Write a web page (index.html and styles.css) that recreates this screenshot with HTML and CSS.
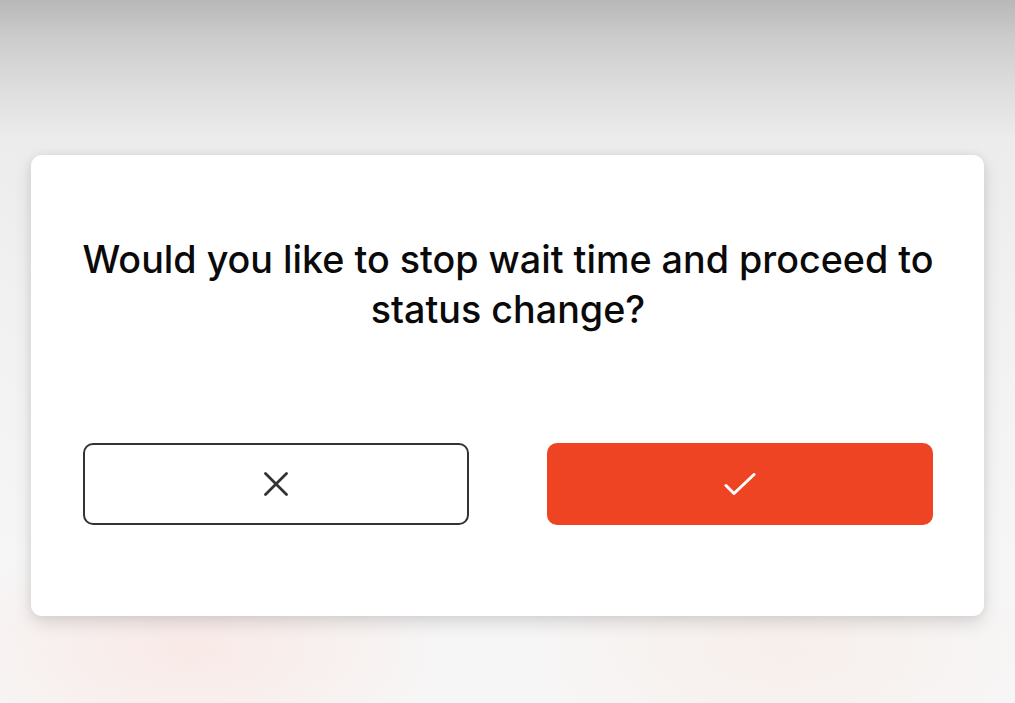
FILE: index.html
```html
<!DOCTYPE html>
<html lang="en">
<head>
<meta charset="utf-8">
<title>Stop wait time</title>
<link rel="stylesheet" href="styles.css">
</head>
<body>
<div class="screen">
  <div class="dialog">
    <p class="question">Would you like to stop wait time and proceed to status change?</p>
    <div class="actions">
      <button class="btn btn-cancel" aria-label="Cancel">
        <svg width="24" height="24" viewBox="0 0 24 24"><path d="M1.5 1.5 L22.5 22.5 M22.5 1.5 L1.5 22.5" stroke="#333333" stroke-width="2.8" stroke-linecap="round" fill="none"/></svg>
      </button>
      <button class="btn btn-confirm" aria-label="Confirm">
        <svg width="32" height="24" viewBox="0 0 32 24"><path d="M2 13.5 L10 21.5 L30 2.5" stroke="#ffffff" stroke-width="3" stroke-linecap="round" stroke-linejoin="round" fill="none"/></svg>
      </button>
    </div>
  </div>
</div>
</body>
</html>
```
FILE: styles.css
```css
html, body {
  margin: 0;
  padding: 0;
}
body {
  width: 1015px;
  height: 703px;
  overflow: hidden;
  font-family: Inter, "Noto Sans", sans-serif;
}
.screen {
  height: 703px;
  box-sizing: border-box;
  padding: 155px 31px 0 31px;
  background:
    radial-gradient(ellipse 260px 120px at 190px 650px, rgba(250, 228, 224, 0.7), rgba(250, 228, 224, 0) 100%),
    radial-gradient(ellipse 260px 120px at 780px 650px, rgba(248, 234, 228, 0.6), rgba(248, 234, 228, 0) 100%),
    linear-gradient(180deg, #b8b8b8 0px, #cdcdcd 40px, #dedede 90px, #ececec 140px, #f1f1f1 300px, #f6f6f6 560px, #f7f6f6 703px);
}
.dialog {
  width: 953px;
  height: 461px;
  box-sizing: border-box;
  background: #ffffff;
  border-radius: 11px;
  box-shadow: 0 7px 18px rgba(0, 0, 0, 0.13), 0 0 8px rgba(0, 0, 0, 0.06);
  padding: 79px 51px 0 52px;
  display: flex;
  flex-direction: column;
}
.question {
  margin: 0 -10px;
  text-align: center;
  font-size: 37.7px;
  line-height: 50px;
  font-weight: 500;
  color: #0a0a0a;
}
.actions {
  margin-top: 109px;
  display: grid;
  grid-template-columns: 386px 386px;
  justify-content: space-between;
}
.btn {
  height: 82px;
  box-sizing: border-box;
  border-radius: 10px;
  display: flex;
  align-items: center;
  justify-content: center;
  padding: 0;
  cursor: pointer;
}
.btn-cancel {
  background: #ffffff;
  border: 2px solid #333333;
}
.btn-confirm {
  background: #ef4423;
  border: none;
}
```
